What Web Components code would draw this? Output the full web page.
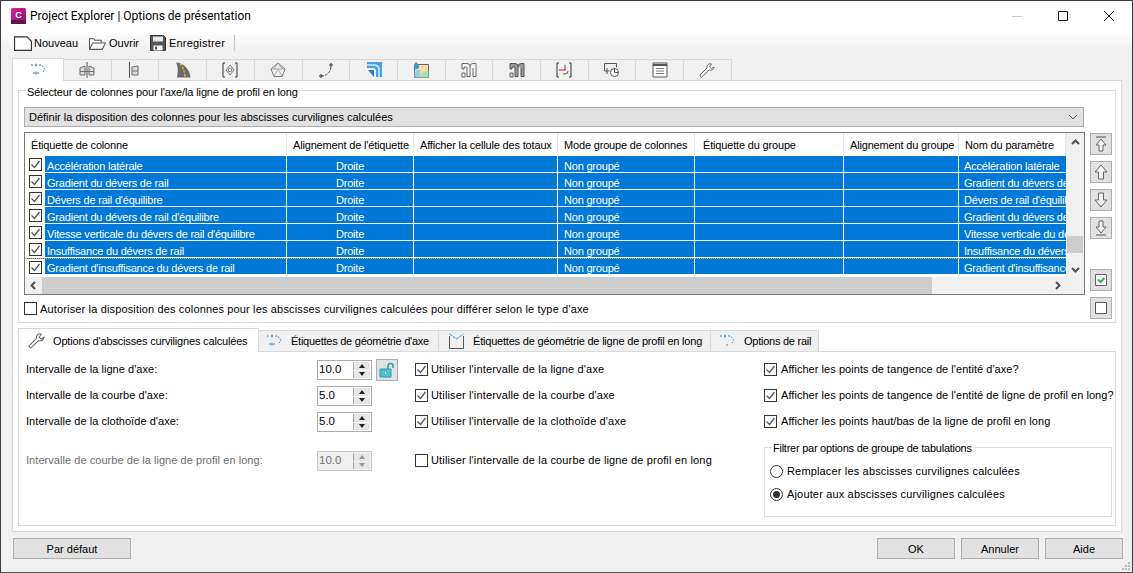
<!DOCTYPE html>
<html lang="fr">
<head>
<meta charset="utf-8">
<title>Options de présentation</title>
<style>
  html,body{margin:0;padding:0;background:#f0f0f0;}
  body{font:11px "Liberation Sans",Arial,sans-serif;color:#000;overflow:hidden;}
</style>
</head>
<body>
<pe-dialog></pe-dialog>
<script>
// icons, all on a 16x16 box
const ICONS = {
  align:`<path d="M1 3h2M5 3h2M9 3h2" stroke="#5a5a5a"/><path d="M6 1.500v3" stroke="#1e88e5"/><path d="M12 3.500l3 4-3 3.500" stroke="#1e88e5" stroke-dasharray="2 1.200" fill="none"/><path d="M3 11h2M7 11h2" stroke="#1e88e5"/><path d="M6 9.500v3" stroke="#5a5a5a"/>`,
  profile:`<path d="M1 6l5-2v9H1zM15 6l-5-2v9h5z" fill="#dcdcdc" stroke="#6e6e6e"/><path d="M8 0v16" stroke="#555"/><path d="M1 9.500h14" stroke="#6e6e6e"/>`,
  offset:`<path d="M2.500 0v16" stroke="#555"/><path d="M5 5l6-1v9H5z" fill="#dcdcdc" stroke="#6e6e6e"/><path d="M5 9h6" stroke="#6e6e6e"/>`,
  road:`<path d="M2 15.500C3.500 9 3 4 1 .5c7.500 0 14 7 14.500 15z" fill="#6a6a6a"/><path d="M5 1.500c3 3 4.500 7.500 5 13.500" stroke="#f5c518" stroke-width="1.300" stroke-dasharray="2.500 1.500" fill="none"/>`,
  target:`<path d="M3 1H1v14h2M13 1h2v14h-2" stroke="#333" fill="none"/><path d="M8 3l4 5-4 5-4-5z" fill="none" stroke="#777"/><circle cx="8" cy="8" r="1.800" fill="none" stroke="#777"/>`,
  house:`<path d="M8 1l7 6-3 7.500H4L1 7z" fill="#f2f2f2" stroke="#777"/><path d="M1 7h14M8 7L4 14.500M8 7l4 7.500M4 7l4-6 4 6" stroke="#999" stroke-width=".8" fill="none"/>`,
  curve:`<path d="M3 14c6 0 10-4 10-10" fill="none" stroke="#555" stroke-dasharray="3 1"/><path d="M1 14h4M3 12v4M11 3h4M13 1v4" stroke="#333"/>`,
  ramp:`<path d="M1 0h15v15h-6V9C10 7 9 6 7 6H1z" fill="#4a9fdc"/><path d="M1 3h7c3 0 5 2 5 5v7" fill="none" stroke="#d8ecfa" stroke-width="1.500"/><path d="M2 8h6v7z" fill="#2f7fc0"/>`,
  map:`<path d="M1.500 2.500h14v13h-14z" fill="#fbd9a8" stroke="#666"/><path d="M7 15.500c0-5 3-6 8.500-7v7z" fill="#9fe3a8"/><path d="M1.500 9c3-2 5-1 5.500 0v6.500H1.500z" fill="#9ccbe8"/><path d="M3 0c2 2 3 3 3 4.500a2.600 2.600 0 0 1-5.200 0C.8 3 2 1.500 3 0z" fill="#3a97d4"/>`,
  pipe:`<path d="M1 1.500h5a3 3 0 0 1 3 3v10H6V6a1 1 0 0 0-1-1H3v2H1zM9 4.500a3 3 0 0 1 3-3h3v13h-3V6" fill="#f4f4f4" stroke="#6a6a6a"/><path d="M1 11h3v4H1z" fill="#f4f4f4" stroke="#6a6a6a"/>`,
  pipe2:`<path d="M1 1.500h5a3 3 0 0 1 3 3v10H6V6a1 1 0 0 0-1-1H3v2H1zM9 4.500a3 3 0 0 1 3-3h3v13h-3V6" fill="#9a9a9a" stroke="#555"/><path d="M1 11h3v4H1z" fill="#d0d0d0" stroke="#6a6a6a"/>`,
  bracket:`<path d="M3 1H1v14h2M13 1h2v14h-2" stroke="#333" fill="none"/><path d="M3 8h7" stroke="#c0202a"/><path d="M9 3v5" stroke="#c0202a"/><path d="M12 9a3 3 0 0 1-3 3H7" stroke="#555" fill="none"/>`,
  note:`<path d="M.5 9V1.500h12V5" fill="none" stroke="#555"/><path d="M.5 9h5M3 6v6" stroke="#555" fill="none"/><circle cx="10.500" cy="10.500" r="4" fill="#fff" stroke="#555"/><path d="M10.500 10.500v-4M10.500 10.500h4" stroke="#555"/>`,
  list:`<path d="M1 1h14v14H1z" fill="#fff" stroke="#555"/><path d="M1 3h14" stroke="#555" stroke-width="2"/><path d="M4 6.500h8M4 9h8M4 11.500h8" stroke="#777"/>`,
  wrench:`<path d="M1.500 14.500l1 .7L10 8c2 .8 4.500-.2 5-3l-2.500 1.500L10.500 5 12.500 2C10 1 7.500 3 8 6L1 13z" fill="#fff" stroke="#666"/>`,
  axis2:`<path d="M1 3h2M5 3h2M9 3h2" stroke="#1e88e5"/><path d="M6 1.500v3" stroke="#1e88e5"/><path d="M12 3.500l3 4-3 3.500" stroke="#1e88e5" stroke-dasharray="2 1.200" fill="none"/><path d="M3 11h2M7 11h2" stroke="#1e88e5"/><path d="M6 9.500v3" stroke="#1e88e5"/>`,
  rail:`<path d="M1 3h2M5 3h2M9 3h2" stroke="#1e88e5"/><path d="M6 1.500v3" stroke="#1e88e5"/><path d="M12 3.500l3 4-3 3.500" stroke="#8a8a8a" stroke-dasharray="2 1.200" fill="none"/><path d="M7 12h2" stroke="#8a8a8a"/>`,
  vee:`<path d="M1.500 3v12.500h14V3" fill="none" stroke="#555"/><path d="M1.500 1l7 5 7-5" fill="none" stroke="#1e88e5" stroke-dasharray="3 1"/>`,
  nouveau:`<path d="M.5 2.500h11l4 4v8H.5z" fill="#fff" stroke="#333"/>`,
  ouvrir:`<path d="M.5 13.500v-10h4l1 1.500h6v2" fill="#fff" stroke="#555"/><path d="M.5 13.500l3-6h12l-3 6z" fill="#fff" stroke="#555"/>`,
  save:`<path d="M.5.500h13l2 2v13H.5z" fill="#555" stroke="#333"/><path d="M3 1.500h10v5H3z" fill="#e8e8e8"/><path d="M3.500 10.500h9v5h-9z" fill="#fff"/><path d="M5 11.500h2v3H5z" fill="#555"/>`,
  lock:`<path d="M1 7h11v8H1z" fill="#4ec4d0" stroke="#2e9cab"/><path d="M9 7V4a2.500 2.500 0 0 1 5 0v2" fill="none" stroke="#2e9cab" stroke-width="1.500"/><path d="M6.500 10v2" stroke="#fff"/>`,
  first:`<path d="M3 1h10" stroke="#555"/><path d="M8 3l5 6h-3v6H6V9H3z" fill="#f4f4f4" stroke="#666"/>`,
  up:`<path d="M8 1l6 7h-3.500v7h-5V8H2z" fill="#f4f4f4" stroke="#666"/>`,
  down:`<path d="M8 15l6-7h-3.500V1h-5v7H2z" fill="#f4f4f4" stroke="#666"/>`,
  last:`<path d="M3 15h10" stroke="#555"/><path d="M8 13l5-6h-3V1H6v6H3z" fill="#f4f4f4" stroke="#666"/>`,
  all:`<path d="M.5.500h11v11H.5z" fill="#fff" stroke="#666"/><path d="M3 5.500l2.500 2.500 4-4" fill="none" stroke="#2fb14c" stroke-width="2"/>`,
  none:`<path d="M.5.500h11v11H.5z" fill="#fff" stroke="#555"/>`,
};

class PeIcon extends HTMLElement {
  connectedCallback(){
    const size = this.getAttribute('size') || 16;
    const box = this.getAttribute('box') || 16;
    const root = this.shadowRoot || this.attachShadow({mode:'open'});
    root.innerHTML = `<style>:host{display:inline-flex;flex:none}svg{display:block}</style>
      <svg width="${size}" height="${size}" viewBox="0 0 ${box} ${box}">${ICONS[this.getAttribute('name')]||''}</svg>`;
  }
}
customElements.define('pe-icon', PeIcon);

// checkbox with optional label in the slot
class PeCheck extends HTMLElement {
  constructor(){
    super();
    this.attachShadow({mode:'open'}).innerHTML = `<style>
      :host{display:inline-flex;align-items:center;gap:var(--check-gap,3px);white-space:nowrap}
      .box{width:13px;height:13px;box-sizing:border-box;border:1px solid #333;background:#fff;flex:none;display:block}
      svg{display:none;width:11px;height:11px}
      :host([checked]) svg{display:block}
    </style><span class="box"><svg viewBox="0 0 11 11"><path d="M1.500 5.500l3 3 5-6.500" fill="none" stroke="#555" stroke-width="1.300"/></svg></span><slot></slot>`;
  }
}
customElements.define('pe-check', PeCheck);

class PeRadio extends HTMLElement {
  constructor(){
    super();
    this.attachShadow({mode:'open'}).innerHTML = `<style>
      :host{display:inline-flex;align-items:center;gap:4px;white-space:nowrap;letter-spacing:.16px}
      .o{width:13px;height:13px;box-sizing:border-box;border:1px solid #333;border-radius:50%;background:#fff;flex:none;display:flex;align-items:center;justify-content:center}
      i{display:none;width:7px;height:7px;border-radius:50%;background:#333}
      :host([checked]) i{display:block}
    </style><span class="o"><i></i></span><slot></slot>`;
  }
}
customElements.define('pe-radio', PeRadio);

class PeButton extends HTMLElement {
  constructor(){
    super();
    this.attachShadow({mode:'open'}).innerHTML = `<style>
      :host{display:flex;align-items:center;justify-content:center;box-sizing:border-box;
        width:78px;height:21px;background:#e1e1e1;border:1px solid #adadad;flex:none}
      :host([square]){width:22px;height:22px}
    </style><slot></slot>`;
  }
}
customElements.define('pe-button', PeButton);

class PeSpin extends HTMLElement {
  constructor(){
    super();
    this.attachShadow({mode:'open'}).innerHTML = `<style>
      :host{display:flex;box-sizing:border-box;width:55px;height:20px;border:1px solid #adadad;background:#fff;align-items:stretch;flex:none;margin-top:2px}
      :host([disabled]){background:#f0f0f0;color:#6d6d6d;border-color:#c8c8c8}
      .v{flex:1;padding:0 1px;line-height:16px;font-size:11.500px}
      .b{width:17px;display:flex;flex-direction:column;gap:1px;padding:1px 1px 1px 0}
      .b i{flex:1;background:#e6e6e6;border-left:1px solid #aaa;display:flex;align-items:center;justify-content:center}
      .b i::after{content:"";border:3px solid transparent;}
      .b i.u::after{border-bottom:4px solid #222;border-top:0}
      .b i.d::after{border-top:4px solid #222;border-bottom:0}
      :host([disabled]) .b i::after{opacity:.4}
    </style><span class="v"><slot></slot></span><span class="b"><i class="u"></i><i class="d"></i></span>`;
  }
}
customElements.define('pe-spin', PeSpin);

class PeGroup extends HTMLElement {
  constructor(){
    super();
    this.attachShadow({mode:'open'}).innerHTML = `<style>
      :host{display:block;box-sizing:border-box;border:1px solid #dcdcdc;position:relative;background:#fff}
      .t{position:absolute;left:var(--legend-left,7px);top:var(--legend-top,-7px);background:#fff;padding:0 1px;line-height:15px;white-space:nowrap;letter-spacing:var(--legend-ls,0)}
    </style><span class="t"><slot name="legend"></slot></span><slot></slot>`;
  }
}
customElements.define('pe-group', PeGroup);

class PeTitlebar extends HTMLElement {
  constructor(){
    super();
    this.attachShadow({mode:'open'}).innerHTML = `<style>
      :host{display:flex;align-items:center;height:30px;background:#fff;flex:none;padding-left:10px}
      .logo{width:15px;height:16px;flex:none;margin-right:4px;margin-top:-1px}
      .logo svg{display:block}
      .txt{flex:1;font:12px Roboto,"Liberation Sans",sans-serif}
      .ctl{display:flex}
      .ctl span{width:46px;height:30px;display:flex;align-items:center;justify-content:center}
    </style>
    <span class="logo"><svg width="15" height="16" viewBox="0 0 15 16"><defs><linearGradient id="g" x1="0" y1="0" x2="1" y2="1"><stop offset="0" stop-color="#d4229a"/><stop offset="1" stop-color="#8a1470"/></linearGradient></defs><path d="M1.500 0h12A1.500 1.500 0 0 1 15 1.500V16H0V1.500A1.500 1.500 0 0 1 1.500 0z" fill="url(#g)"/><path d="M0 12h15v4H0z" fill="#5f1447"/><text x="7.500" y="9.500" font-family="Liberation Sans" font-size="9" font-weight="700" fill="#fff" text-anchor="middle">C</text></svg></span>
    <span class="txt"><slot></slot></span>
    <span class="ctl">
      <span><svg width="10" height="10"><path d="M0 5.500h10" stroke="#ccc"/></svg></span>
      <span><svg width="10" height="10"><path d="M.5.500h9v9h-9z" fill="none" stroke="#111"/></svg></span>
      <span><svg width="10" height="10"><path d="M0 0l10 10M10 0L0 10" stroke="#111"/></svg></span>
    </span>`;
  }
}
customElements.define('pe-titlebar', PeTitlebar);

class PeToolbar extends HTMLElement {
  constructor(){
    super();
    this.attachShadow({mode:'open'}).innerHTML = `<style>
      :host{display:flex;align-items:center;height:24px;flex:none;padding-left:13px;background:linear-gradient(#fff,#f0f0f0 80%)}
      .i{display:flex;align-items:center;gap:2px}
      .o{margin-left:11px;gap:3px}
      .e{margin-left:11px;gap:3px;letter-spacing:.2px}
      .sep{width:1px;height:16px;background:#c8c8c8;margin-left:9px}
    </style>
    <span class="i"><pe-icon name="nouveau" size="18"></pe-icon>Nouveau</span>
    <span class="i o"><pe-icon name="ouvrir" size="17"></pe-icon>Ouvrir</span>
    <span class="i e"><pe-icon name="save" size="16"></pe-icon>Enregistrer</span>
    <span class="sep"></span>`;
  }
}
customElements.define('pe-toolbar', PeToolbar);

// icon only tab strip of the outer page
class PeIconTabs extends HTMLElement {
  constructor(){
    super();
    const names = ['align','profile','offset','road','target','house','curve','ramp','map','pipe','pipe2','bracket','note','list','wrench'];
    this.attachShadow({mode:'open'}).innerHTML = `<style>
      :host{display:flex;align-items:flex-end;height:23px;padding-left:11px;flex:none}
      .t{width:47.710px;height:21px;box-sizing:border-box;background:#f0f0f0;border:1px solid #d9d9d9;border-left:0;border-bottom:0;display:flex;align-items:center;justify-content:center}
      .t.on{width:52px;height:23px;background:#fff;border-left:1px solid #d9d9d9;position:relative;top:1px}
    </style>` + names.map((n,i)=>`<span class="t ${i?'':'on'}"><pe-icon name="${n}"></pe-icon></span>`).join('');
  }
}
customElements.define('pe-icon-tabs', PeIconTabs);

const COLS = [
  ['Étiquette de colonne',262],['Alignement de l\'étiquette',127],['Afficher la cellule des totaux',144],
  ['Mode groupe de colonnes',137],['Étiquette du groupe',149],['Alignement du groupe',115],['Nom du paramètre',107]
];
const ROWS = [
  'Accélération latérale','Gradient du dévers de rail','Dévers de rail d\'équilibre',
  'Gradient du dévers de rail d\'équilibre','Vitesse verticale du dévers de rail d\'équilibre',
  'Insuffisance du dévers de rail','Gradient d\'insuffisance du dévers de rail'
];

class PeGrid extends HTMLElement {
  constructor(){
    super();
    const tpl = COLS.map(c=>c[1]+'px').join(' ');
    const head = COLS.map(c=>`<div class="h">${c[0]}</div>`).join('');
    const rows = ROWS.map((r,i)=>`
      <div class="r ${i==6?'focus':''}">
        <div class="c first"><span class="chk"><pe-check checked></pe-check></span><span class="lab">${r}</span></div>
        <div class="c mid">Droite</div><div class="c"></div><div class="c">Non groupé</div><div class="c"></div><div class="c"></div><div class="c">${r}</div>
      </div>`).join('');
    this.attachShadow({mode:'open'}).innerHTML = `<style>
      :host{display:grid;grid-template-columns:1fr 18px;grid-template-rows:1fr 17px;box-sizing:border-box;height:162px;border:1px solid #7a7a7a;background:#fff}
      .view{overflow:hidden;width:1041px}
      .heads,.r{display:grid;grid-template-columns:${tpl};width:1041px}
      .h{height:23px;line-height:25px;padding-left:6px;border-right:1px solid #e5e5e5;box-sizing:border-box;white-space:nowrap;overflow:hidden;letter-spacing:-.17px}
      .h:nth-child(5){padding-left:8px}
      .r{height:17px}
      .c{background:#0078d7;color:#fff;line-height:20px;height:17px;box-sizing:border-box;border-right:1px solid #fff;border-bottom:1px solid #fff;padding-left:6px;white-space:nowrap;overflow:hidden;letter-spacing:-.2px}
      .c:last-child{border-right:0;padding-left:5px}
      .mid{text-align:center;padding-left:0}
      .first{display:flex;padding:0}
      .chk{width:20px;background:#fffff2;display:flex;align-items:center;justify-content:center;flex:none;height:17px}
      .lab{padding-left:2px}
      .focus .c{border-top:1px dotted #f2a33a;line-height:18px}
      .vs{background:#f0f0f0;position:relative;display:flex;flex-direction:column;align-items:center;justify-content:space-between;padding:6px 0 4px;box-sizing:border-box}
      .thumb{position:absolute;left:1px;right:1px;top:103px;height:17px;background:#cdcdcd}
      .hs{background:#f0f0f0;display:flex;align-items:center;position:relative}
      .hthumb{width:890px;height:17px;background:#cdcdcd;margin-left:17px}
      .hs svg{position:absolute;top:4px}
      .corner{background:#f0f0f0}
    </style>
    <div class="view"><div class="heads">${head}</div>${rows}</div>
    <div class="vs"><svg width="9" height="6"><path d="M1 5l3.500-3.500L8 5" fill="none" stroke="#505050" stroke-width="2"/></svg><div class="thumb"></div><svg width="9" height="6"><path d="M1 1l3.500 3.500L8 1" fill="none" stroke="#505050" stroke-width="2"/></svg></div>
    <div class="hs"><svg style="left:5px" width="6" height="9"><path d="M5 1L1.500 4.500 5 8" fill="none" stroke="#505050" stroke-width="2"/></svg><div class="hthumb"></div><svg style="right:5px" width="6" height="9"><path d="M1 1l3.500 3.500L1 8" fill="none" stroke="#505050" stroke-width="2"/></svg></div>
    <div class="corner"></div>`;
  }
}
customElements.define('pe-grid', PeGrid);

class PeColumnPicker extends HTMLElement {
  constructor(){
    super();
    this.attachShadow({mode:'open'}).innerHTML = `<style>
      :host{display:block;margin:9px 5px 0 5px;flex:none;--legend-top:-6px;--legend-ls:-.13px}
      pe-group{height:233px;padding:16px 31px 0 5px}
      .combo{height:20px;box-sizing:border-box;border:1px solid #adadad;background:#e1e1e1;display:flex;align-items:center;justify-content:space-between;padding:0 5px 0 4px}
      .body{display:grid;grid-template-columns:1061px 22px;column-gap:5px;margin-top:5px;align-items:start;margin-right:-27px}
      .side{display:flex;flex-direction:column;gap:6px;margin-top:1px}
      .side .gap{height:18px}
      .below{margin-top:7px;letter-spacing:.15px}
      pe-grid{height:163px}
    </style>
    <pe-group>
      <span slot="legend">Sélecteur de colonnes pour l'axe/la ligne de profil en long</span>
      <div class="combo"><span>Définir la disposition des colonnes pour les abscisses curvilignes calculées</span>
        <svg width="10" height="6"><path d="M1 1l4 4 4-4" fill="none" stroke="#555"/></svg></div>
      <div class="body">
        <div>
          <pe-grid></pe-grid>
          <div class="below"><pe-check>Autoriser la disposition des colonnes pour les abscisses curvilignes calculées pour différer selon le type d'axe</pe-check></div>
        </div>
        <div class="side">
          <pe-button square><pe-icon name="first"></pe-icon></pe-button>
          <pe-button square><pe-icon name="up"></pe-icon></pe-button>
          <pe-button square><pe-icon name="down"></pe-icon></pe-button>
          <pe-button square><pe-icon name="last"></pe-icon></pe-button>
          <div class="gap"></div>
          <pe-button square><pe-icon name="all" box="12" size="12"></pe-icon></pe-button>
          <pe-button square><pe-icon name="none" box="12" size="12"></pe-icon></pe-button>
        </div>
      </div>
    </pe-group>`;
  }
}
customElements.define('pe-column-picker', PeColumnPicker);

class PeLabelTabs extends HTMLElement {
  constructor(){
    super();
    this.attachShadow({mode:'open'}).innerHTML = `<style>
      :host{display:flex;align-items:flex-end;height:23px;flex:none;position:relative;z-index:1}
      .t{height:21px;box-sizing:border-box;background:#f0f0f0;border:1px solid #d9d9d9;border-left:0;border-bottom:0;display:flex;align-items:center;white-space:nowrap;flex:none}
      .on{height:24px;background:#fff;border-left:1px solid #d9d9d9;position:relative;top:1px;width:241px;padding-left:9px;gap:8px;letter-spacing:-.17px}
      .a{width:180px;padding-left:7px;gap:9px;letter-spacing:-.25px}
      .b{width:272px;padding-left:9px;gap:9px;letter-spacing:-.2px}
      .c{width:108px;padding-left:8px;gap:9px;letter-spacing:-.25px}
    </style>
    <span class="t on"><pe-icon name="wrench" size="17"></pe-icon>Options d'abscisses curvilignes calculées</span>
    <span class="t a"><pe-icon name="axis2"></pe-icon>Étiquettes de géométrie d'axe</span>
    <span class="t b"><pe-icon name="vee"></pe-icon>Étiquettes de géométrie de ligne de profil en long</span>
    <span class="t c"><pe-icon name="rail"></pe-icon>Options de rail</span>`;
  }
}
customElements.define('pe-label-tabs', PeLabelTabs);

class PeIntervals extends HTMLElement {
  constructor(){
    super();
    this.attachShadow({mode:'open'}).innerHTML = `<style>
      :host{display:grid;box-sizing:border-box;height:175px;border:1px solid #d9d9d9;background:#fff;flex:none;
        grid-template-columns:291px 98px 349px 1fr;grid-template-rows:26px 26px 26px 13px 26px 44px;padding:4px 0 0 7px;--legend-ls:-.25px}
      .l,.s,.c,.r{display:flex;align-items:center;white-space:nowrap}
      .l{letter-spacing:.05px}
      .c{letter-spacing:.15px}
      .r{letter-spacing:.05px;--check-gap:4px}
      .s{gap:4px}
      .dis{color:#6d6d6d}
      pe-group{grid-column:4;grid-row:5/7;width:348px;height:70px;box-sizing:border-box;padding:16px 5px 0 5px;display:flex;flex-direction:column;gap:9px}
      pe-group pe-radio{height:14px}
      .s4,.l4,.c4{grid-row:5}
    </style>
    <div class="l">Intervalle de la ligne d'axe:</div>
    <div class="s"><pe-spin>10.0</pe-spin><pe-button square style="margin-top:2px"><pe-icon name="lock"></pe-icon></pe-button></div>
    <div class="c"><pe-check checked>Utiliser l'intervalle de la ligne d'axe</pe-check></div>
    <div class="r"><pe-check checked>Afficher les points de tangence de l'entité d'axe?</pe-check></div>

    <div class="l">Intervalle de la courbe d'axe:</div>
    <div class="s"><pe-spin>5.0</pe-spin></div>
    <div class="c"><pe-check checked>Utiliser l'intervalle de la courbe d'axe</pe-check></div>
    <div class="r"><pe-check checked>Afficher les points de tangence de l'entité de ligne de profil en long?</pe-check></div>

    <div class="l">Intervalle de la clothoïde d'axe:</div>
    <div class="s"><pe-spin>5.0</pe-spin></div>
    <div class="c"><pe-check checked>Utiliser l'intervalle de la clothoïde d'axe</pe-check></div>
    <div class="r"><pe-check checked>Afficher les points haut/bas de la ligne de profil en long</pe-check></div>

    <div class="l l4 dis">Intervalle de courbe de la ligne de profil en long:</div>
    <div class="s s4"><pe-spin disabled>10.0</pe-spin></div>
    <div class="c c4"><pe-check>Utiliser l'intervalle de la courbe de ligne de profil en long</pe-check></div>
    <pe-group>
      <span slot="legend">Filtrer par options de groupe de tabulations</span>
      <pe-radio>Remplacer les abscisses curvilignes calculées</pe-radio>
      <pe-radio checked>Ajouter aux abscisses curvilignes calculées</pe-radio>
    </pe-group>`;
  }
}
customElements.define('pe-intervals', PeIntervals);

class PeDialog extends HTMLElement {
  constructor(){
    super();
    this.attachShadow({mode:'open'}).innerHTML = `<style>
      :host{display:flex;flex-direction:column;box-sizing:border-box;width:1133px;height:573px;background:#f0f0f0;border:1px solid #3c3c3c;border-bottom-color:#555;overflow:hidden;position:relative}
      .page{box-sizing:border-box;height:452px;margin:0 10px 0 11px;background:#fff;border:1px solid #d9d9d9;display:flex;flex-direction:column;flex:none}
      .lower{margin:5px 5px 0 5px;display:flex;flex-direction:column}
      .foot{display:flex;justify-content:space-between;padding:6px 9px 0 12px}
      .right{display:flex;gap:6px}
      pe-button[wide]{width:118px}
      .grip{position:absolute;right:1px;bottom:1px;display:block}
    </style>
    <pe-titlebar>Project Explorer | Options de présentation</pe-titlebar>
    <pe-toolbar></pe-toolbar>
    <pe-icon-tabs style="margin-top:2px"></pe-icon-tabs>
    <div class="page">
      <pe-column-picker></pe-column-picker>
      <div class="lower">
        <pe-label-tabs></pe-label-tabs>
        <pe-intervals></pe-intervals>
      </div>
    </div>
    <div class="foot">
      <pe-button wide>Par défaut</pe-button>
      <div class="right"><pe-button>OK</pe-button><pe-button>Annuler</pe-button><pe-button>Aide</pe-button></div>
    </div>
    <svg class="grip" width="10" height="10"><path d="M7 1h2v2H7zM4 4h2v2H4zM7 4h2v2H7zM1 7h2v2H1zM4 7h2v2H4zM7 7h2v2H7z" fill="#bdbdbd"/></svg>`;
  }
}
customElements.define('pe-dialog', PeDialog);
</script>
</body>
</html>
